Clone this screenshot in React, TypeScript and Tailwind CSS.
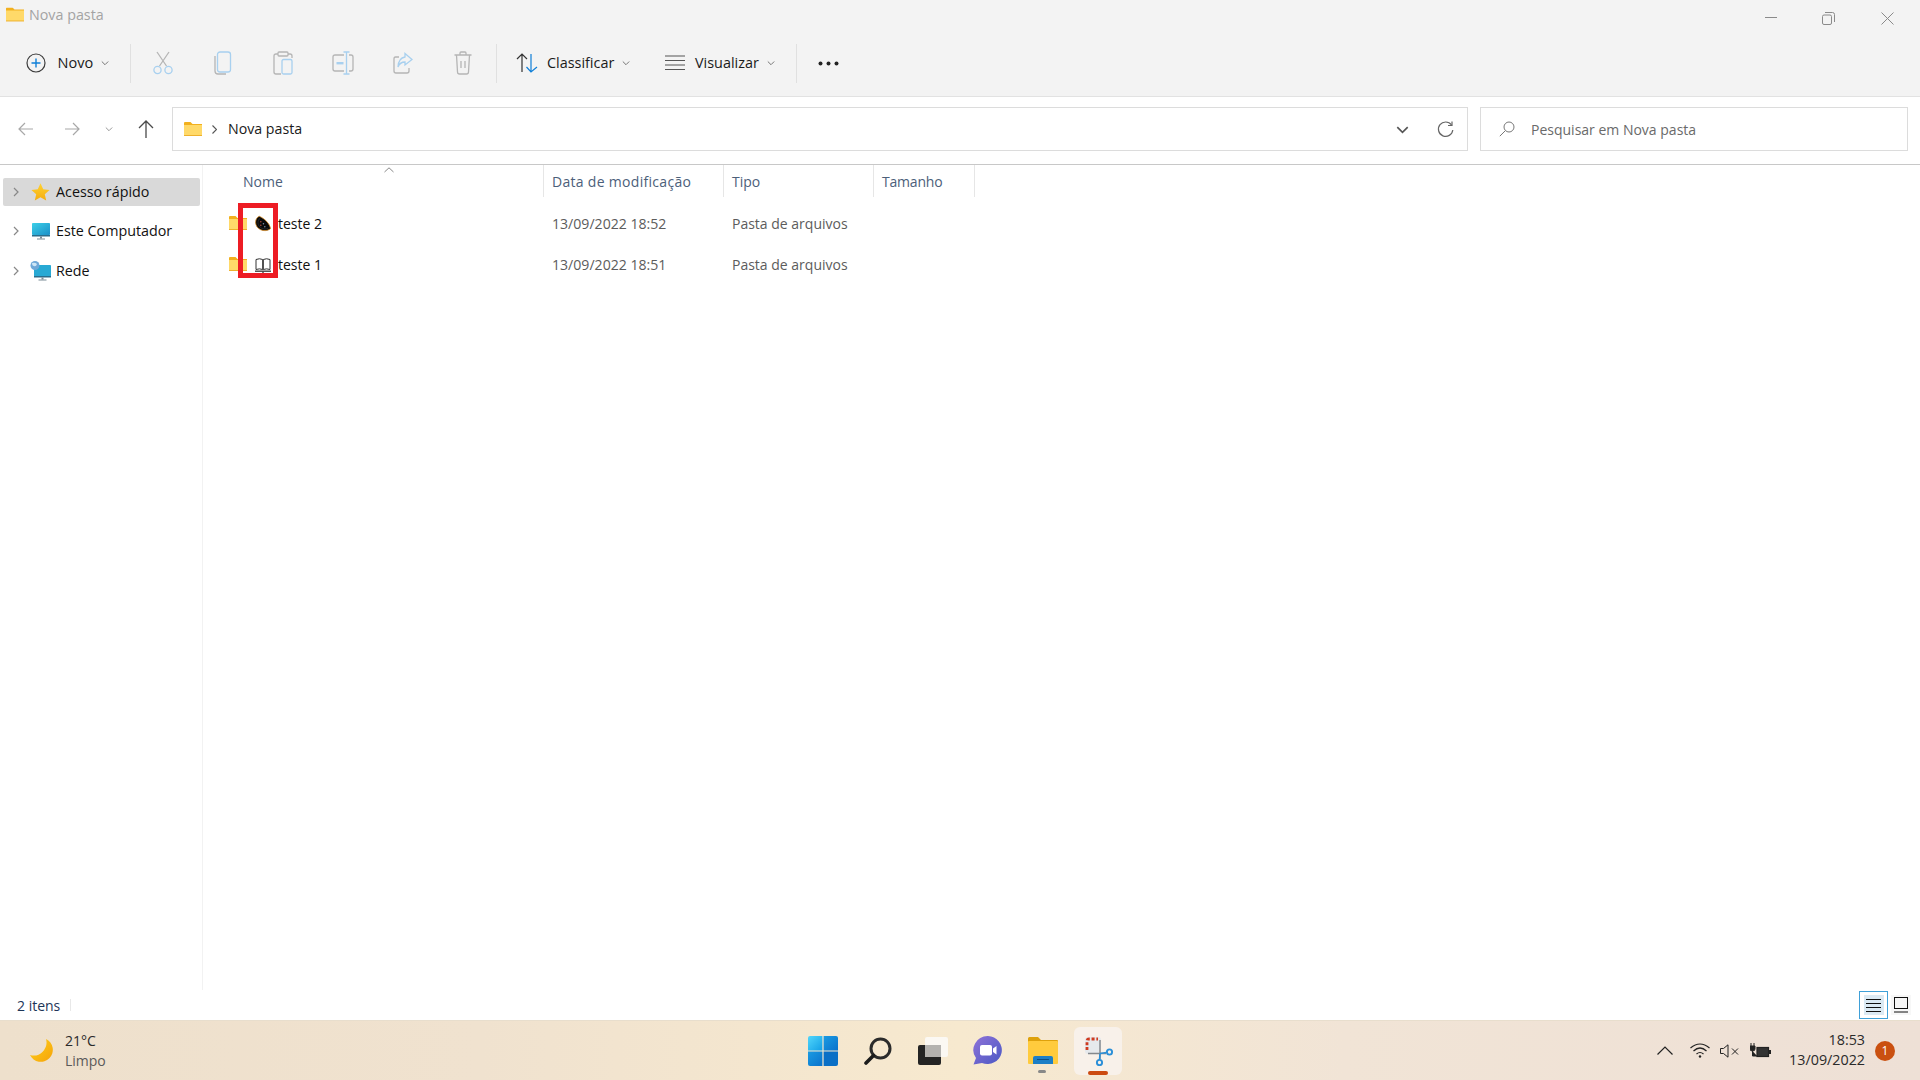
import React from "react";

const Chevron = ({ c = "#777", w = 8 }: { c?: string; w?: number }) => (
  <svg width={w} height={w} viewBox="0 0 8 8" fill="none" stroke={c} strokeWidth="1">
    <path d="M0.8 2.5 L4 5.7 L7.2 2.5" />
  </svg>
);

const FolderIcon = ({ w = 18, h = 14 }: { w?: number; h?: number }) => (
  <svg width={w} height={h} viewBox="0 0 18 14">
    <path d="M0 1 Q0 0 1 0 H6.5 L8.5 2 H18 V14 H0 Z" fill="#f2b01e" />
    <rect x="0" y="3" width="18" height="10.5" fill="#ffd969" />
    <rect x="0" y="13" width="18" height="1" fill="#eeb12d" />
  </svg>
);

const Gray = "#b5b5b5";
const Blue = "#a8d0ef";

const CutIcon = () => (
  <svg width="20" height="24" viewBox="0 0 20 24" fill="none" strokeWidth="1.3">
    <path d="M6.5 15 L16 1 M13.5 15 L4 1" stroke={Gray} />
    <circle cx="4.5" cy="19" r="3.6" stroke={Blue} />
    <circle cx="15.5" cy="19" r="3.6" stroke={Blue} />
  </svg>
);
const CopyIcon = () => (
  <svg width="18" height="24" viewBox="0 0 18 24" fill="none" strokeWidth="1.3">
    <rect x="3.5" y="1" width="13" height="20" rx="2.5" stroke={Blue} />
    <path d="M1 5 V20 Q1 23 4 23 H12" stroke={Gray} />
  </svg>
);
const PasteIcon = () => (
  <svg width="20" height="24" viewBox="0 0 20 24" fill="none" strokeWidth="1.3">
    <path d="M5 3 H3 Q1 3 1 5 V21 Q1 23 3 23 H8 M15 3 H17 Q19 3 19 5 V7" stroke={Gray} />
    <rect x="5" y="1" width="10" height="4" rx="1" stroke={Gray} />
    <rect x="9" y="8.5" width="10" height="14.5" rx="1.5" stroke={Blue} />
  </svg>
);
const RenameIcon = () => (
  <svg width="22" height="24" viewBox="0 0 22 24" fill="none" strokeWidth="1.3">
    <path d="M12 4 H3 Q1 4 1 6 V18 Q1 20 3 20 H12 M17 4 H19 Q21 4 21 6 V18 Q21 20 19 20 H17" stroke={Gray} />
    <path d="M14.5 1 V23 M11.5 1 H17.5 M11.5 23 H17.5" stroke={Blue} />
    <rect x="4.5" y="11" width="7" height="2.4" fill={Blue} />
  </svg>
);
const ShareIcon = () => (
  <svg width="20" height="22" viewBox="0 0 20 22" fill="none" strokeWidth="1.3">
    <path d="M6 5 H2.5 Q1 5 1 7 V19 Q1 21 3 21 H14 Q16 21 16 19 V16" stroke={Gray} />
    <path d="M12 1.5 L19 7.5 L12 13 V10 Q7 10 5 15 Q5.5 6 12 5 Z" stroke={Blue} />
  </svg>
);
const TrashIcon = () => (
  <svg width="18" height="24" viewBox="0 0 18 24" fill="none" stroke={Gray} strokeWidth="1.3">
    <path d="M0.5 4 H17.5 M6 4 V2 Q6 1 7 1 H11 Q12 1 12 2 V4 M2.5 4 L3.5 21 Q3.6 23 5.5 23 H12.5 Q14.4 23 14.5 21 L15.5 4 M7 10 V17 M11 10 V17" />
  </svg>
);

const ToolIcon = ({ children }: { children: React.ReactNode }) => (
  <div className="flex w-[60px] items-center justify-center">{children}</div>
);
const Sep = () => <div className="h-[39px] w-px bg-[#e0e0e0]" />;

const Watermelon = () => (
  <svg width="17" height="17" viewBox="0 0 17 17">
    <path d="M4.5 0.8 C0 2.8 -0.5 9 2.8 12.8 C6.2 16.6 12.5 17.2 16.5 14 C16 9 10 3 4.5 0.8 Z" fill="#0a0a0a" stroke="#d98a1c" strokeWidth="0.8" />
    <path d="M5.5 2.8 C2.5 5 2.5 9.5 5 12 C7.5 14.5 11.5 15 14 13.5" fill="none" stroke="#2c2c2c" strokeWidth="0.9" />
    <circle cx="6.2" cy="6.6" r="0.8" fill="#b8503c" />
    <circle cx="9" cy="8.8" r="0.8" fill="#7e93ab" />
    <circle cx="6.2" cy="10.4" r="0.8" fill="#b8503c" />
    <circle cx="10.4" cy="12" r="0.8" fill="#7e93ab" />
  </svg>
);
const Book = () => (
  <svg width="16" height="16" viewBox="0 0 16 16" fill="none">
    <path d="M1 2.5 Q4.5 1 7.7 2.5 V12.5 Q4.5 11.2 1 12.5 Z M15 2.5 Q11.5 1 8.3 2.5 V12.5 Q11.5 11.2 15 12.5 Z" stroke="#333" strokeWidth="1" fill="#fff" />
    <rect x="0" y="13.5" width="16" height="1.4" fill="#444" />
    <rect x="7" y="14.5" width="2" height="1.2" fill="#444" />
  </svg>
);

const Star = () => (
  <svg width="19" height="18" viewBox="0 0 19 18">
    <defs>
      <linearGradient id="st" x1="0" y1="0" x2="0" y2="1">
        <stop offset="0" stopColor="#ffd232" />
        <stop offset="1" stopColor="#f5ad0e" />
      </linearGradient>
    </defs>
    <path d="M9.5 0.3 L12.2 6.2 L18.6 6.9 L13.8 11.2 L15.2 17.6 L9.5 14.3 L3.8 17.6 L5.2 11.2 L0.4 6.9 L6.8 6.2 Z" fill="url(#st)" />
  </svg>
);
const Monitor = () => (
  <svg width="18" height="17" viewBox="0 0 18 17">
    <defs>
      <linearGradient id="mn" x1="0" y1="0" x2="1" y2="1">
        <stop offset="0" stopColor="#3cd0e8" />
        <stop offset="1" stopColor="#1a8fc8" />
      </linearGradient>
    </defs>
    <rect x="0" y="0" width="18" height="12" rx="0.8" fill="url(#mn)" />
    <rect x="0" y="12" width="18" height="1.5" fill="#2a6d8c" />
    <rect x="8" y="13.5" width="2" height="2" fill="#7a8b96" />
    <rect x="5" y="15.5" width="8" height="1" fill="#7a8b96" />
  </svg>
);
const Network = () => (
  <svg width="21" height="20" viewBox="0 0 21 20">
    <rect x="4" y="4" width="17" height="12" rx="0.8" fill="#28a9d4" />
    <rect x="4" y="15" width="17" height="1.5" fill="#2a6d8c" />
    <rect x="11.5" y="16.5" width="2" height="2" fill="#7a8b96" />
    <rect x="8.5" y="18.5" width="8" height="1" fill="#7a8b96" />
    <circle cx="5" cy="4.5" r="4.5" fill="#6fa8d8" />
    <path d="M2 2 Q5 1 7 3 Q6 6 4 5 Q2 5 2 2" fill="#cfe6f5" />
  </svg>
);

const NavItem = ({ icon, label, active }: { icon: React.ReactNode; label: string; active?: boolean }) => (
  <div className={`flex h-[28px] w-[197px] items-center rounded-[2px] ${active ? "bg-[#d9d9d9]" : ""}`}>
    <svg className="ml-[10px]" width="6" height="10" viewBox="0 0 6 10" fill="none" stroke="#888" strokeWidth="1.2">
      <path d="M1 1 L5 5 L1 9" />
    </svg>
    <div className="ml-[9px] flex w-[25px] items-center justify-center">{icon}</div>
    <span className="ml-[3px] text-[14.3px] text-[#111]">{label}</span>
  </div>
);

const Row = ({ icon, name, date }: { icon: React.ReactNode; name: string; date: string }) => (
  <div className="flex h-[41px] items-center">
    <div className="flex w-[341px] items-center pl-[26px]">
      <div className="-translate-y-[1px]"><FolderIcon /></div>
      <div className="ml-[8px] flex w-[16px] items-center justify-center">{icon}</div>
      <span className="ml-[7px] text-[14px] text-[#111]">{name}</span>
    </div>
    <div className="w-[180px] pl-[8px] text-[14.1px] text-[#5c5c5c]">{date}</div>
    <div className="pl-[8px] text-[14px] text-[#5c5c5c]">Pasta de arquivos</div>
  </div>
);

const Col = ({ className, label }: { className: string; label: string }) => (
  <div className={`flex h-full items-center border-r border-[#e6e6e6] text-[14px] text-[#4c607a] ${className}`}>{label}</div>
);

const WinLogo = () => (
  <svg width="30" height="30" viewBox="0 0 30 30">
    <defs>
      <linearGradient id="w1" x1="0" y1="0" x2="1" y2="1">
        <stop offset="0" stopColor="#52d6fb" />
        <stop offset="1" stopColor="#129fe6" />
      </linearGradient>
      <linearGradient id="w2" x1="0" y1="0" x2="1" y2="1">
        <stop offset="0" stopColor="#1a9be2" />
        <stop offset="1" stopColor="#0a72cc" />
      </linearGradient>
    </defs>
    <path d="M2 0 H14.4 V14.4 H0 V2 Q0 0 2 0 Z" fill="url(#w1)" />
    <path d="M15.6 0 H28 Q30 0 30 2 V14.4 H15.6 Z" fill="url(#w2)" />
    <path d="M0 15.6 H14.4 V30 H2 Q0 30 0 28 Z" fill="url(#w2)" />
    <path d="M15.6 15.6 H30 V28 Q30 30 28 30 H15.6 Z" fill="#0a6fc6" />
  </svg>
);
const SearchTb = () => (
  <svg width="28" height="28" viewBox="0 0 28 28" fill="none">
    <circle cx="16.5" cy="11.5" r="9.5" stroke="#2b2b2b" strokeWidth="3" />
    <path d="M9.5 18.5 L2 26" stroke="#1c1c1c" strokeWidth="3.6" strokeLinecap="round" />
  </svg>
);
const TaskView = () => (
  <svg width="30" height="28" viewBox="0 0 30 28">
    <rect x="0" y="8" width="23" height="20" rx="2" fill="#242424" />
    <rect x="7" y="0" width="23" height="20" rx="2" fill="#fbf9f6" fillOpacity="0.92" />
    <rect x="7" y="8" width="16" height="12" fill="#b4b2af" />
  </svg>
);
const Chat = () => (
  <svg width="30" height="29" viewBox="0 0 30 29">
    <defs>
      <linearGradient id="ch" x1="0" y1="0" x2="1" y2="1">
        <stop offset="0" stopColor="#8f72d8" />
        <stop offset="1" stopColor="#4a58c4" />
      </linearGradient>
    </defs>
    <path d="M15 0 A14.5 14 0 1 1 9 27 L0.5 28.5 L3 22 A14.5 14 0 0 1 15 0 Z" fill="url(#ch)" />
    <rect x="7" y="9" width="12" height="10.5" rx="2" fill="#fff" />
    <path d="M20 12.5 L23.5 10 V18.5 L20 16 Z" fill="#fff" />
  </svg>
);
const ExplorerTb = () => (
  <svg width="30" height="27" viewBox="0 0 30 27">
    <path d="M0 1.5 Q0 0 1.5 0 H10 L13 3 H29 Q30 3 30 4 V10 H0 Z" fill="#dea10b" />
    <rect x="0" y="4" width="30" height="23" rx="1" fill="#ffcb3d" />
    <path d="M5 27 V21 Q5 19 7 19 H23 Q25 19 25 21 V27 Z" fill="#1d7fc6" />
    <rect x="9" y="22" width="12" height="1" fill="#0c4f86" />
  </svg>
);
const SnipTb = () => (
  <svg width="29" height="29" viewBox="0 0 29 29" fill="none">
    <rect x="0" y="0" width="16" height="17" rx="3" fill="#e6e9ec" />
    <path d="M2 13 V4 Q2 2 4 2 H13" stroke="#cf3a1e" strokeWidth="2.8" strokeDasharray="3 1.8" />
    <path d="M15 3 V22 M3 16.5 H21" stroke="#85898d" strokeWidth="1.5" />
    <path d="M15 16.5 L21.5 15.5 M15 16.5 L14.5 23" stroke="#2b8fd8" strokeWidth="1.6" />
    <circle cx="24.5" cy="15" r="2.6" stroke="#2b8fd8" strokeWidth="1.9" />
    <circle cx="14.5" cy="25.5" r="2.6" stroke="#2b8fd8" strokeWidth="1.9" />
  </svg>
);

const Slot = ({ children }: { children: React.ReactNode }) => (
  <div className="relative flex h-full w-[55px] items-center justify-center">{children}</div>
);

export default function App() {
  return (
    <div className="flex h-[1080px] w-[1920px] flex-col overflow-hidden bg-white font-['Open_Sans',sans-serif]">
      {/* header */}
      <div className="h-[97px] shrink-0 border-b border-[#e2e2e2] bg-[#f3f3f3]">
        <div className="flex h-[36px] items-center">
          <div className="flex -translate-y-[3.5px] items-center">
            <div className="ml-[6px]"><FolderIcon /></div>
            <span className="ml-[5px] text-[14.3px] text-[#a3a3a3]">Nova pasta</span>
          </div>
          <div className="ml-auto flex items-center">
            <svg width="12" height="2" viewBox="0 0 12 2"><rect width="12" height="1" fill="#8a8a8a" /></svg>
            <svg className="ml-[45px]" width="13" height="13" viewBox="0 0 13 13" fill="none" stroke="#8a8a8a" strokeWidth="1">
              <rect x="0.5" y="3" width="9" height="9.5" rx="1.5" />
              <path d="M3 0.5 H10.5 Q12.5 0.5 12.5 2.5 V10" />
            </svg>
            <svg className="ml-[46px] mr-[26px]" width="13" height="13" viewBox="0 0 13 13" fill="none" stroke="#8a8a8a" strokeWidth="1">
              <path d="M0.5 0.5 L12.5 12.5 M12.5 0.5 L0.5 12.5" />
            </svg>
          </div>
        </div>
        <div className="flex h-[54px] items-center">
          <div className="flex w-[130px] items-center pl-[26px]">
            <svg width="20" height="20" viewBox="0 0 20 20" fill="none">
              <circle cx="10" cy="10" r="9" stroke="#3c3c3c" strokeWidth="1.2" />
              <path d="M10 5.5 V14.5 M5.5 10 H14.5" stroke="#0f7fd8" strokeWidth="1.4" />
            </svg>
            <span className="ml-[11.5px] text-[14.5px] text-[#1a1a1a]">Novo</span>
            <div className="ml-[8px]"><Chevron /></div>
          </div>
          <Sep />
          <div className="ml-[2px] flex">
            <ToolIcon><CutIcon /></ToolIcon>
            <ToolIcon><CopyIcon /></ToolIcon>
            <ToolIcon><PasteIcon /></ToolIcon>
            <ToolIcon><RenameIcon /></ToolIcon>
            <ToolIcon><ShareIcon /></ToolIcon>
            <ToolIcon><TrashIcon /></ToolIcon>
          </div>
          <div className="ml-[3px]"><Sep /></div>
          <div className="flex w-[152px] items-center pl-[19px]">
            <svg width="22" height="20" viewBox="0 0 22 20" fill="none" strokeWidth="1.2">
              <path d="M6 19 V1 M1 6 L6 1 L11 6" stroke="#333" />
              <path d="M15 1 V19 M10.5 14 L15 19 L21 14" stroke="#0f7fd8" />
            </svg>
            <span className="ml-[9px] text-[14.4px] text-[#1a1a1a]">Classificar</span>
            <div className="ml-[7.5px]"><Chevron /></div>
          </div>
          <div className="flex w-[147px] items-center pl-[16px]">
            <svg width="20" height="16" viewBox="0 0 20 16" stroke="#555" strokeWidth="1.1">
              <path d="M0 1 H20 M0 5.5 H20 M0 10 H20 M0 14.5 H20" />
            </svg>
            <span className="ml-[10px] text-[14.4px] text-[#1a1a1a]">Visualizar</span>
            <div className="ml-[8px]"><Chevron /></div>
          </div>
          <Sep />
          <svg className="ml-[21px]" width="21" height="5" viewBox="0 0 21 5" fill="#222">
            <circle cx="2.5" cy="2.5" r="2" /><circle cx="10.5" cy="2.5" r="2" /><circle cx="18.5" cy="2.5" r="2" />
          </svg>
        </div>
      </div>

      {/* address row */}
      <div className="flex h-[68px] shrink-0 items-start border-b border-[#c8c8c8] pt-[10px]">
        <div className="flex h-[44px] w-[172px] items-center">
          <svg className="ml-[18px]" width="15" height="14" viewBox="0 0 15 14" fill="none" stroke="#a8a8a8" strokeWidth="1.2">
            <path d="M15 7 H1 M7 1 L1 7 L7 13" />
          </svg>
          <svg className="ml-[32px]" width="15" height="14" viewBox="0 0 15 14" fill="none" stroke="#a8a8a8" strokeWidth="1.2">
            <path d="M0 7 H14 M8 1 L14 7 L8 13" />
          </svg>
          <div className="ml-[25px]"><Chevron c="#999" /></div>
          <svg className="ml-[25px]" width="16" height="18" viewBox="0 0 16 18" fill="none" stroke="#4a4a4a" strokeWidth="1.3">
            <path d="M8 18 V1 M1 8 L8 1 L15 8" />
          </svg>
        </div>
        <div className="flex h-[44px] w-[1296px] items-center border border-[#dcdcdc]">
          <div className="ml-[11px]"><FolderIcon /></div>
          <svg className="ml-[10px]" width="5" height="9" viewBox="0 0 5 9" fill="none" stroke="#555" strokeWidth="1.1">
            <path d="M0.5 0.5 L4.5 4.5 L0.5 8.5" />
          </svg>
          <span className="ml-[11px] text-[14.2px] text-[#1a1a1a]">Nova pasta</span>
          <div className="ml-auto mr-[13px] flex items-center">
            <Chevron c="#555" w={13} />
            <svg className="ml-[28px]" width="17" height="17" viewBox="0 0 17 17" fill="none" stroke="#666" strokeWidth="1.2">
              <path d="M14.5 4 A7.2 7.2 0 1 0 15.8 9" />
              <path d="M15 0.5 V4.5 H11" />
            </svg>
          </div>
        </div>
        <div className="ml-[12px] flex h-[44px] w-[428px] items-center border border-[#dcdcdc]">
          <svg className="ml-[18px]" width="16" height="16" viewBox="0 0 16 16" fill="none" stroke="#777" strokeWidth="1">
            <circle cx="10" cy="6" r="5" />
            <path d="M6.3 9.7 L0.8 15.2" />
          </svg>
          <span className="ml-[16px] text-[14px] text-[#6a6a6a]">Pesquisar em Nova pasta</span>
        </div>
      </div>

      {/* body */}
      <div className="flex min-h-0 flex-1">
        <div className="flex w-[203px] shrink-0 flex-col gap-[11.5px] border-r border-[#f2f2f2] pl-[3px] pt-[12.5px]">
          <NavItem active icon={<Star />} label="Acesso rápido" />
          <NavItem icon={<Monitor />} label="Este Computador" />
          <NavItem icon={<Network />} label="Rede" />
        </div>
        <div className="relative flex-1">
          <div className="flex h-[32px]">
            <Col className="w-[341px] pl-[40px]" label="Nome" />
            <Col className="w-[180px] pl-[8px] tracking-[0.3px]" label="Data de modificação" />
            <Col className="w-[150px] pl-[8px]" label="Tipo" />
            <Col className="w-[101px] pl-[8px] tracking-[-0.2px]" label="Tamanho" />
          </div>
          <svg className="absolute left-[181px] top-[2px]" width="10" height="6" viewBox="0 0 10 6" fill="none" stroke="#888" strokeWidth="1">
            <path d="M0.5 5 L5 0.8 L9.5 5" />
          </svg>
          <div className="pt-[6px]">
            <Row icon={<Watermelon />} name="teste 2" date="13/09/2022 18:52" />
            <Row icon={<Book />} name="teste 1" date="13/09/2022 18:51" />
          </div>
          <div className="absolute left-[35px] top-[38px] h-[75px] w-[40px] border-[5px] border-[#ed1c24]" />
        </div>
      </div>

      {/* status */}
      <div className="flex h-[30px] shrink-0 items-center">
        <span className="ml-[17px] mt-[1px] text-[14px] text-[#1d3557]">2 itens</span>
        <div className="ml-[10px] h-[12px] w-px bg-[#e8e8e8]" />
        <div className="ml-auto mr-[9px] flex items-center gap-[3px]">
          <div className="flex h-[28px] w-[29px] items-center justify-center border border-[#3fa0d8] bg-white">
            <div className="flex h-[20px] w-[20px] items-center justify-center bg-[#dbeaf4]">
              <svg width="15" height="13" viewBox="0 0 15 13" stroke="#111" strokeWidth="1"><path d="M0 0.5 H15 M0 4.5 H15 M0 8.5 H15 M0 12.5 H15" /></svg>
            </div>
          </div>
          <div className="flex h-[20px] w-[20px] items-center justify-center bg-[#f7f7f7]">
            <svg width="14" height="16" viewBox="0 0 14 16" fill="none" stroke="#111" strokeWidth="1"><rect x="0.5" y="0.5" width="13" height="11" /><path d="M0 15 H14" /></svg>
          </div>
        </div>
      </div>

      {/* taskbar */}
      <div className="flex h-[60px] shrink-0 items-center border-t border-[#e8decd] bg-[linear-gradient(90deg,#eee0cc_0%,#f0e2cf_25%,#f7e9cf_50%,#f1e4d6_70%,#eee0d6_100%)]">
        <div className="flex h-full w-[795px] shrink-0 items-center">
          <svg className="ml-[30px]" width="24" height="24" viewBox="0 0 24 24">
            <defs>
              <linearGradient id="mo" x1="0" y1="0" x2="1" y2="1">
                <stop offset="0" stopColor="#ffd11c" />
                <stop offset="1" stopColor="#f5a30a" />
              </linearGradient>
            </defs>
            <path d="M16 0 A12 12 0 1 1 0 16 A13 13 0 0 0 16 0 Z" fill="url(#mo)" />
          </svg>
          <div className="ml-[11px] flex flex-col">
            <span className="text-[14px] leading-[20px] text-[#2a2a2a]">21°C</span>
            <span className="text-[14px] leading-[20px] text-[#5a5a5a]">Limpo</span>
          </div>
        </div>
        <div className="flex h-full">
          <Slot><WinLogo /></Slot>
          <Slot><SearchTb /></Slot>
          <Slot><TaskView /></Slot>
          <Slot><Chat /></Slot>
          <Slot>
            <ExplorerTb />
            <div className="absolute bottom-[7px] left-[23px] h-[3px] w-[8px] rounded-full bg-[#888]" />
          </Slot>
          <Slot>
            <div className="relative flex h-[48px] w-[48px] items-start justify-start rounded-[6px] bg-[#f8f1ea] pl-[11px] pt-[10px]">
              <SnipTb />
              <div className="absolute bottom-0 left-[14px] h-[4px] w-[20px] rounded-full bg-[#cc4a10]" />
            </div>
          </Slot>
        </div>
        <div className="ml-auto flex items-center">
          <svg width="16" height="9" viewBox="0 0 16 9" fill="none" stroke="#222" strokeWidth="1.2"><path d="M0.5 8.5 L8 1 L15.5 8.5" /></svg>
          <svg className="ml-[17.5px]" width="20" height="15" viewBox="0 0 20 15" fill="none" stroke="#222" strokeWidth="1.2">
            <path d="M0.5 5 Q10 -3 19.5 5 M3.5 8 Q10 2 16.5 8 M6.5 11 Q10 8 13.5 11" />
            <circle cx="10" cy="13.5" r="1.2" fill="#222" stroke="none" />
          </svg>
          <svg className="ml-[10px]" width="19" height="14" viewBox="0 0 19 14" fill="none" stroke="#222" strokeWidth="1">
            <path d="M0.5 4.5 H3.5 L8 0.8 V13.2 L3.5 9.5 H0.5 Z M12 4.5 L18 10.5 M18 4.5 L12 10.5" />
          </svg>
          <svg className="ml-[11px]" width="21" height="16" viewBox="0 0 21 16">
            <path d="M1 0 V3 M4 0 V3 M0 3 H5 V6 Q5 8 2.5 8 Q0 8 0 6 Z M2.5 8 V13 H7" stroke="#222" strokeWidth="1" fill="#222" />
            <rect x="7" y="4.5" width="11.5" height="9" fill="#333" stroke="#222" strokeWidth="1.2" />
            <rect x="19" y="7" width="2" height="4" fill="#222" />
          </svg>
          <div className="ml-[18px] flex -translate-y-[1px] flex-col items-end text-[14.3px] leading-[20px] text-[#2a2a2a]">
            <span>18:53</span>
            <span>13/09/2022</span>
          </div>
          <div className="ml-[10px] mr-[25px] flex h-[20px] w-[20px] items-center justify-center rounded-full bg-[#ca5010] text-[12px] text-white">1</div>
        </div>
      </div>
    </div>
  );
}
